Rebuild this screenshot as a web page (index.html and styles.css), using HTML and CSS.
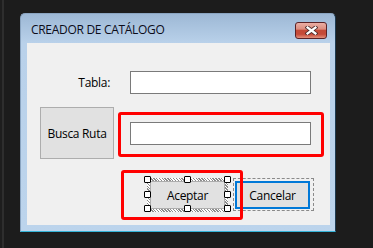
FILE: index.html
```html
<!DOCTYPE html>
<html lang="es">
<head>
    <meta charset="UTF-8">
    <meta name="viewport" content="width=device-width, initial-scale=1.0">
    <title>Creador de catálogo</title>
    <link rel="stylesheet" href="styles.css">
</head>
<body>
    <div class="window">
        <div class="titlebar">
            <span class="title">CREADOR DE CATÁLOGO</span>
            <button class="close" aria-label="Cerrar">
                <svg width="13" height="9" viewBox="0 0 13 9">
                    <path d="M2.5 1.5 L10.5 7.5 M10.5 1.5 L2.5 7.5" stroke="#4a2a2a" stroke-width="4" stroke-linecap="square"/>
                    <path d="M2.5 1.5 L10.5 7.5 M10.5 1.5 L2.5 7.5" stroke="#fff" stroke-width="2.2" stroke-linecap="square"/>
                </svg>
            </button>
        </div>
        <div class="frame-body">
            <div class="client">
                <div class="form">
                    <label class="field-label" for="tabla">Tabla:</label>
                    <input class="field" id="tabla">
                    <button class="btn browse">Busca Ruta</button>
                    <input class="field" id="ruta">
                </div>

                <div class="actions">
                    <!-- designer selection around Aceptar -->
                    <div class="selected">
                        <button class="btn action">Aceptar</button>
                        <span class="handle h-tl"></span>
                        <span class="handle h-tc"></span>
                        <span class="handle h-tr"></span>
                        <span class="handle h-ml"></span>
                        <span class="handle h-mr"></span>
                        <span class="handle h-bl"></span>
                        <span class="handle h-bc"></span>
                        <span class="handle h-br"></span>
                    </div>
                    <div class="focus-frame">
                        <button class="btn action default">Cancelar</button>
                    </div>
                </div>

                <div class="mark mark-path"></div>
                <div class="mark mark-ok"></div>
            </div>
        </div>
    </div>
</body>
</html>
```

FILE: styles.css
```css
* {
    box-sizing: border-box;
}
body {
    margin: 0;
    padding: 13px 0 0 20px;
    height: 248px;
    overflow: hidden;
    font-family: "Open Sans", "Noto Sans", sans-serif;
    font-size: 12px;
    letter-spacing: -0.3px;
    color: #000;
    background: linear-gradient(to right, #1e1e1e 2px, #2e2e2e 2px, #2e2e2e 4px, #1c1c1c 4px);
}
.window {
    width: 316px;
    height: 219px;
    border: 1px solid #8aa4c0;
    border-bottom-color: #35b3d6;
    border-right-color: #1d3b52;
    border-radius: 5px 5px 0 0;
    background: linear-gradient(#9db8d5, #b9d1ea 29px, #bcd4ec);
}
.titlebar {
    display: flex;
    justify-content: space-between;
    align-items: flex-start;
    height: 29px;
    padding: 0 8px 0 10px;
}
.title {
    margin-top: 7px;
    font-size: 12px;
    color: #0c0c1a;
}
.close {
    margin-top: 8px;
    width: 32px;
    height: 17px;
    padding: 0;
    display: flex;
    align-items: center;
    justify-content: center;
    border: 1px solid #5a2226;
    border-radius: 3px;
    background: linear-gradient(#eaaea4, #dc8e80 40%, #c44a37 50%, #c54a38 75%, #e3907c);
}
.frame-body {
    padding: 0 5px 6px 6px;
}
.client {
    position: relative;
    height: 182px;
    background: #f0f0f0;
}
.form {
    display: grid;
    grid-template-columns: 74px 181px;
    grid-template-rows: 23px 52px;
    column-gap: 16px;
    row-gap: 13px;
    padding: 28px 0 0 13px;
    align-items: center;
}
.field-label {
    text-align: right;
    padding-right: 4px;
}
.field {
    height: 23px;
    border: 1px solid #7a7a7a;
    background: #fff;
    font: inherit;
}
.btn {
    font: inherit;
    letter-spacing: inherit;
    color: #000;
    background: #e1e1e1;
    border: 1px solid #adadad;
    padding: 0;
}
.browse {
    height: 52px;
    width: 74px;
}
.actions {
    display: flex;
    justify-content: flex-end;
    align-items: flex-start;
    gap: 5px;
    margin-top: 19px;
    padding-right: 16px;
}
.action {
    display: block;
    width: 75px;
    height: 28px;
}
.selected {
    position: relative;
    border: 3px solid #999;
    border-image: repeating-linear-gradient(45deg, #8c8c8c 0 1px, #fff 1px 2px) 3;
}
.handle {
    position: absolute;
    width: 7px;
    height: 7px;
    border: 1px solid #000;
    border-radius: 1px;
    background: #fff;
}
.h-tl { left: -6px; top: -5px; }
.h-tc { left: 34px; top: -5px; }
.h-tr { left: 74px; top: -5px; }
.h-ml { left: -6px; top: 10px; }
.h-mr { left: 74px; top: 10px; }
.h-bl { left: -6px; top: 24px; }
.h-bc { left: 34px; top: 24px; }
.h-br { left: 74px; top: 24px; }
.focus-frame {
    border: 1px dashed #8a8a8a;
    padding: 2px 3px 1px 1px;
}
.default {
    border: 2px solid #0078d7;
}
.mark {
    position: absolute;
    border: 3px solid #ff0000;
    border-radius: 3px;
}
.mark-path {
    left: 91px;
    top: 69px;
    width: 206px;
    height: 45px;
}
.mark-ok {
    left: 94px;
    top: 127px;
    width: 122px;
    height: 50px;
}
```
